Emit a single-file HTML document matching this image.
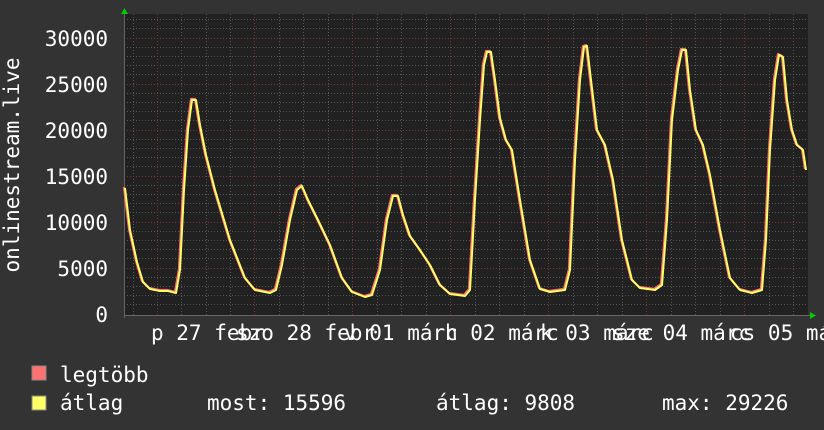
<!DOCTYPE html>
<html><head><meta charset="utf-8"><style>
html,body{margin:0;padding:0;background:#333;}
svg{display:block}
text{font-family:"DejaVu Sans Mono","Liberation Mono",monospace;font-size:21px;fill:#fff}
</style></head><body>
<svg width="824" height="430" viewBox="0 0 824 430" xmlns="http://www.w3.org/2000/svg">
<rect width="824" height="430" fill="#333"/>
<rect x="124" y="14" width="684" height="301" fill="#212121"/>
<g stroke="#555" stroke-width="1" stroke-dasharray="1,2">
<path d="M133.5 14V315M181.5 14V315M206.5 14V315M230.5 14V315M279.5 14V315M303.5 14V315M328.5 14V315M377.5 14V315M401.5 14V315M426.5 14V315M475.5 14V315M499.5 14V315M524.5 14V315M573.5 14V315M597.5 14V315M622.5 14V315M671.5 14V315M695.5 14V315M720.5 14V315M769.5 14V315M793.5 14V315"/>
<path d="M124 19.5H808M124 28.5H808M124 47.5H808M124 56.5H808M124 65.5H808M124 74.5H808M124 93.5H808M124 102.5H808M124 111.5H808M124 120.5H808M124 139.5H808M124 148.5H808M124 157.5H808M124 166.5H808M124 185.5H808M124 194.5H808M124 203.5H808M124 212.5H808M124 231.5H808M124 240.5H808M124 249.5H808M124 258.5H808M124 277.5H808M124 286.5H808M124 295.5H808M124 304.5H808"/>
</g>
<g stroke="#7a3333" stroke-width="1" stroke-dasharray="1,2">
<path d="M157.5 14V315M254.5 14V315M352.5 14V315M450.5 14V315M548.5 14V315M646.5 14V315M744.5 14V315"/>
<path d="M124 38.5H808M124 84.5H808M124 130.5H808M124 176.5H808M124 222.5H808M124 268.5H808"/>
</g>
<path d="M124 315.5H812M124.5 10V318" stroke="#666" stroke-width="1"/>
<polygon points="121,14 124.5,8 128,14" fill="#0c0"/>
<polygon points="810,312 816,315.5 810,319" fill="#0c0"/>
<g fill="none" stroke-linejoin="round">
<polyline stroke="#ff7070" stroke-width="2.2" transform="translate(-1,-1)" points="125,188 130,230 137,262 143,282 150,289 160,291 168,291 176,293 180,270 184,190 188,130 192,100 196,100 200,125 206,155 215,190 230,240 245,278 255,290 270,293 276,290 282,265 290,220 297,190 302,186 308,200 318,220 330,245 342,278 352,292 365,297 372,295 380,270 387,220 393,196 398,196 403,215 410,236 420,250 430,265 440,285 450,294 465,296 470,290 475,200 480,120 484,65 487,52 491,52 495,80 500,118 506,140 512,150 520,200 530,260 540,289 550,292 565,290 570,270 575,160 580,80 584,47 587,46 591,80 597,130 605,145 613,180 622,240 632,280 640,288 655,290 662,285 667,220 672,120 678,70 682,50 686,50 690,90 696,130 703,145 710,175 720,230 730,278 740,290 752,293 762,290 766,240 770,150 775,80 779,55 783,57 787,100 792,130 797,145 803,150 806,170"/>
<polyline stroke="#ffff66" stroke-width="2" points="125,188 130,230 137,262 143,282 150,289 160,291 168,291 176,293 180,270 184,190 188,130 192,100 196,100 200,125 206,155 215,190 230,240 245,278 255,290 270,293 276,290 282,265 290,220 297,190 302,186 308,200 318,220 330,245 342,278 352,292 365,297 372,295 380,270 387,220 393,196 398,196 403,215 410,236 420,250 430,265 440,285 450,294 465,296 470,290 475,200 480,120 484,65 487,52 491,52 495,80 500,118 506,140 512,150 520,200 530,260 540,289 550,292 565,290 570,270 575,160 580,80 584,47 587,46 591,80 597,130 605,145 613,180 622,240 632,280 640,288 655,290 662,285 667,220 672,120 678,70 682,50 686,50 690,90 696,130 703,145 710,175 720,230 730,278 740,290 752,293 762,290 766,240 770,150 775,80 779,55 783,57 787,100 792,130 797,145 803,150 806,170"/>
</g>
<g text-anchor="end">
<text x="108" y="46">30000</text>
<text x="108" y="92">25000</text>
<text x="108" y="138">20000</text>
<text x="108" y="184">15000</text>
<text x="108" y="230">10000</text>
<text x="108" y="276">5000</text>
<text x="108" y="322">0</text>
</g>
<text transform="translate(19,165) rotate(-90)" text-anchor="middle">onlinestream.live</text>
<text x="151" y="340">p 27 febr</text>
<text x="236" y="340">szo 28 febr</text>
<text x="344" y="340">v 01 márc</text>
<text x="445" y="340">h 02 márc</text>
<text x="540" y="340">k 03 márc</text>
<text x="612" y="340">sze 04 márc</text>
<text x="730" y="340">cs 05 márc</text>
<rect x="32" y="366" width="14" height="14" fill="#ff7070" stroke="#888" stroke-width="1"/>
<rect x="32" y="396" width="14" height="14" fill="#ffff66" stroke="#888" stroke-width="1"/>
<text x="60" y="382">legtöbb</text>
<text x="60" y="410">átlag</text>
<text x="207" y="410">most: 15596</text>
<text x="436" y="410">átlag: 9808</text>
<text x="662" y="410">max: 29226</text>
</svg>
</body></html>
